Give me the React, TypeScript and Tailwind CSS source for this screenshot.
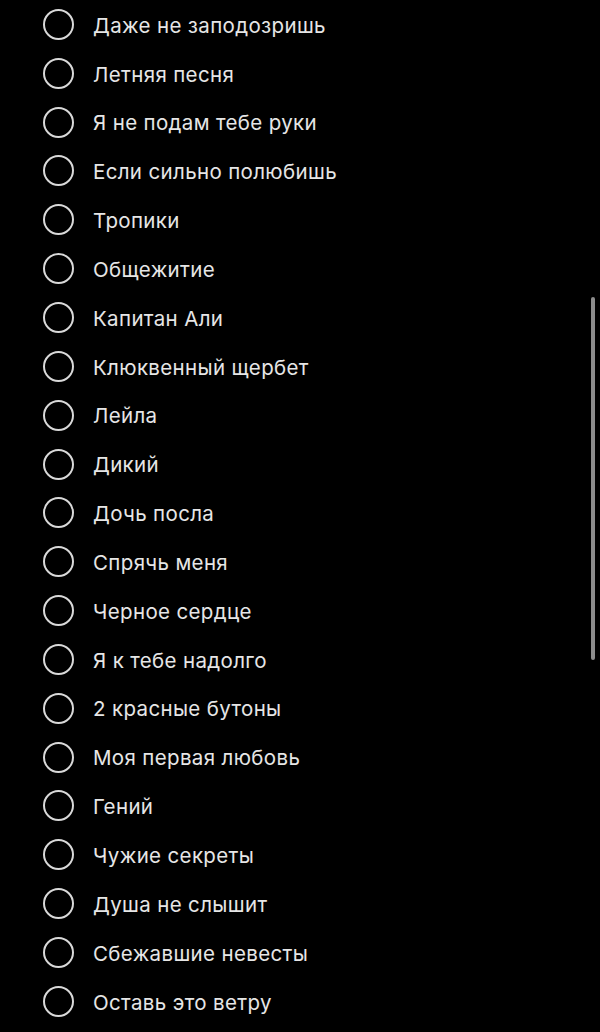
const items = [
  'Даже не заподозришь',
  'Летняя песня',
  'Я не подам тебе руки',
  'Если сильно полюбишь',
  'Тропики',
  'Общежитие',
  'Капитан Али',
  'Клюквенный щербет',
  'Лейла',
  'Дикий',
  'Дочь посла',
  'Спрячь меня',
  'Черное сердце',
  'Я к тебе надолго',
  '2 красные бутоны',
  'Моя первая любовь',
  'Гений',
  'Чужие секреты',
  'Душа не слышит',
  'Сбежавшие невесты',
  'Оставь это ветру',
];

function Row({ label }: { label: string }) {
  return (
    <div className="flex items-center h-[48.85px]">
      <div className="ml-[43px] w-[31px] h-[31px] rounded-full border-2 border-[#d9d9d9] shrink-0" />
      <span className="ml-[19px] mt-[3px] text-[20.5px] leading-none text-[#e6e6e6] tracking-[0.35px]" style={{ fontFamily: 'Inter, "Liberation Sans", sans-serif' }}>
        {label}
      </span>
    </div>
  );
}

export default function App() {
  return (
    <div className="relative w-[600px] h-[1032px] bg-black overflow-hidden">
      <div className="flex flex-col">
        {items.map(t => <Row key={t} label={t} />)}
      </div>
      <div className="absolute left-[591px] top-[297px] w-[4px] h-[363px] rounded-full bg-[#8c8c8c]" />
    </div>
  );
}
